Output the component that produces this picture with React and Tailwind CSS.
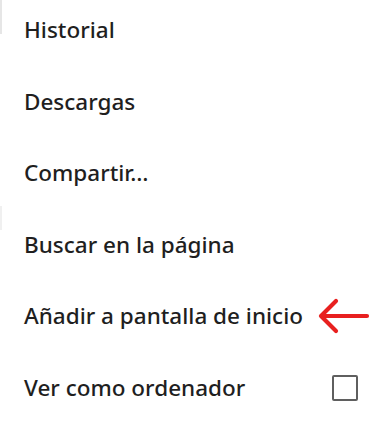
export default function App() {
  const items = [
    "Historial",
    "Descargas",
    "Compartir…",
    "Buscar en la página",
    "Añadir a pantalla de inicio",
    "Ver como ordenador",
  ];
  return (
    <div className="relative w-[386px] h-[426px] overflow-hidden bg-white" style={{ fontFamily: '"Noto Sans", sans-serif' }}>
      <div className="absolute left-0 top-0 w-[2px] h-[34px] bg-[#e6e6e6]" />
      <div className="absolute left-0 top-[206px] w-[2px] h-[24px] bg-[#f0f0f0]" />
      <div className="flex flex-col mt-[-6px]">
        {items.map((t, i) => (
          <div key={t} className="flex items-center h-[71.6px] pl-[24px] pr-[28px] text-[22.5px] font-medium text-[#1f1f1f]">
            <span className="flex-1 whitespace-nowrap">{t}</span>
            {i === 4 && (
              <svg width="54" height="38" viewBox="0 0 54 38" className="mr-[-13px]">
                <path d="M4 19 H50 M19 4 L4 19 L19 34" fill="none" stroke="#e8201f" strokeWidth="4.2" strokeLinecap="round" strokeLinejoin="round" />
              </svg>
            )}
            {i === 5 && (
              <div className="w-[26px] h-[26px] border-[2.5px] border-[#5f5f5f] rounded-[2px]" />
            )}
          </div>
        ))}
      </div>
    </div>
  );
}
